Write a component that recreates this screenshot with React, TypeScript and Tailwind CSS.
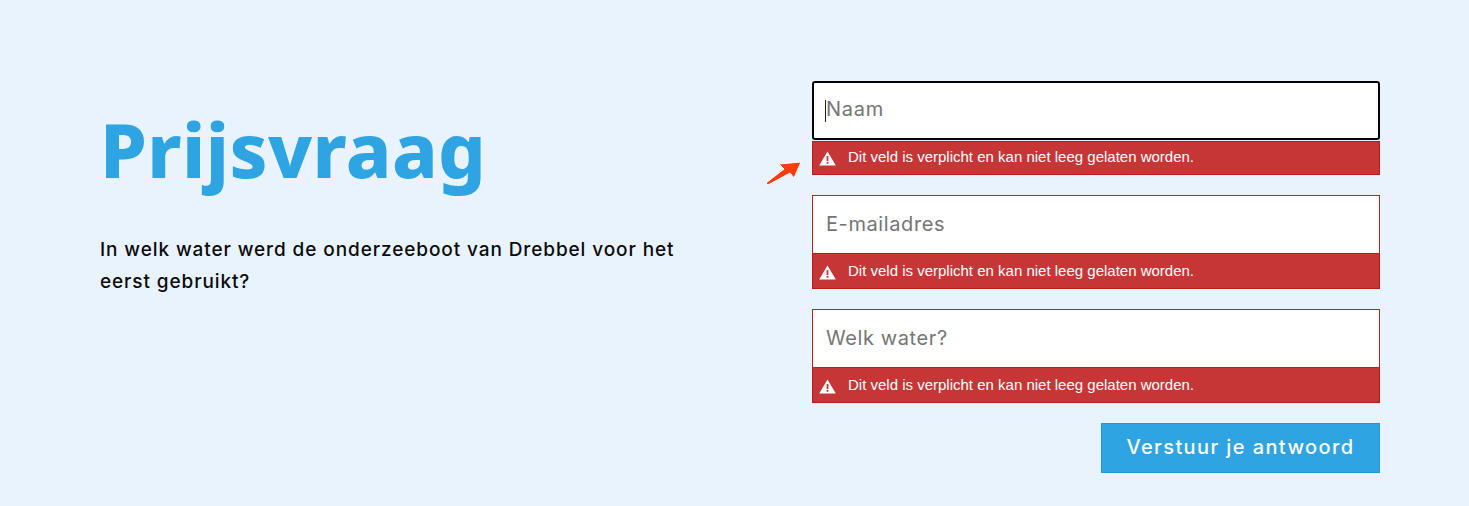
const ErrorIcon = () => (
  <svg width="17" height="15" viewBox="0 0 17 15" className="shrink-0 mt-[2px]">
    <path d="M8.5 0.5 L16.8 14.6 H0.2 Z" fill="#ffffff" />
    <rect x="7.6" y="5" width="1.8" height="5" fill="#c73636" />
    <rect x="7.6" y="11" width="1.8" height="1.8" fill="#c73636" />
  </svg>
);

interface FieldProps {
  placeholder: string;
  active?: boolean;
}

const Field = ({ placeholder, active }: FieldProps) => (
  <div className="relative w-[568px]">
    <input
      placeholder={placeholder}
      className={
        active
          ? "block w-full h-[59px] pb-[3px] bg-white border-2 border-black rounded-[3px] px-[12px] text-[20px] font-['Inter',sans-serif] tracking-[0.7px] text-[#757575] placeholder:text-[#757575] outline-none"
          : "block w-full h-[58px] pb-[2px] bg-white border-x border-t border-[#b5261e] px-[13px] text-[20px] font-['Inter',sans-serif] tracking-[0.6px] text-[#757575] placeholder:text-[#757575] outline-none"
      }
    />
    {active && <span className="absolute left-[13px] top-[19px] w-px h-[22px] bg-[#222222]" />}
    <div
      className={`flex items-center ${active ? "h-[34px] mt-px pb-[1px]" : "h-[36px]"} bg-[#c73636] border border-[#b91c1c] pl-[6px] gap-[12px] text-white text-[15px] font-['Liberation_Sans',sans-serif]`}
    >
      <ErrorIcon />
      <span>Dit veld is verplicht en kan niet leeg gelaten worden.</span>
    </div>
  </div>
);

export default function App() {
  return (
    <div className="bg-[#e8f3fe] min-h-[506px] flex justify-between pl-[100px] pr-[89px] pt-[81px] pb-[33px]">
      <div className="w-[590px] pt-[18px]">
        <h1 className="text-[#2fa4e2] text-[75px] leading-[100px] font-extrabold font-['Noto_Sans',sans-serif] tracking-[0.4px]">
          Prijsvraag
        </h1>
        <p className="mt-[35px] text-[#0b0b0b] text-[19px] leading-[32px] font-medium font-['Inter',sans-serif] tracking-[0.9px]">
          In welk water werd de onderzeeboot van Drebbel voor het eerst gebruikt?
        </p>
      </div>

      <form className="relative flex flex-col items-end gap-[20px]">
        <svg width="42" height="32" viewBox="0 0 42 32" className="absolute left-[-49px] top-[74px]">
          <path
            d="M3 28 L5 30 L27 18 L31 23 L38 7 L16 9 L21 14 Z"
            fill="#ff3d0c"
            stroke="#ffffff"
            strokeWidth="1"
            strokeLinejoin="round"
          />
        </svg>
        <Field placeholder="Naam" active />
        <Field placeholder="E-mailadres" />
        <Field placeholder="Welk water?" />
        <button
          type="button"
          className="w-[279px] h-[50px] pb-[2px] bg-[#2fa4e2] border border-[#1e98d8] text-white text-[20px] font-medium font-['Inter',sans-serif] tracking-[1.4px]"
        >
          Verstuur je antwoord
        </button>
      </form>
    </div>
  );
}
